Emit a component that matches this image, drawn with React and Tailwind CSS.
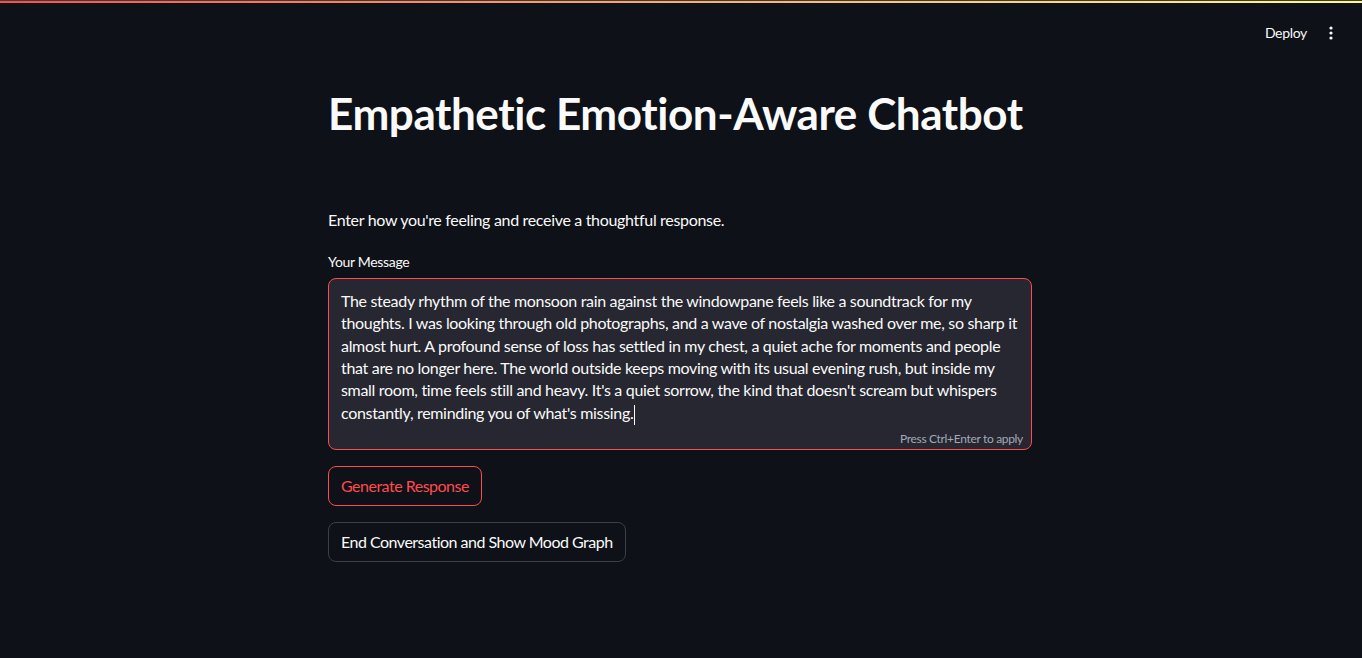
import React from "react";

const lines = [
  "The steady rhythm of the monsoon rain against the windowpane feels like a soundtrack for my",
  "thoughts. I was looking through old photographs, and a wave of nostalgia washed over me, so sharp it",
  "almost hurt. A profound sense of loss has settled in my chest, a quiet ache for moments and people",
  "that are no longer here. The world outside keeps moving with its usual evening rush, but inside my",
  "small room, time feels still and heavy. It's a quiet sorrow, the kind that doesn't scream but whispers",
  "constantly, reminding you of what's missing.",
];

const App = () => {
  return (
    <div
      className="min-h-screen w-full bg-[#0e1117] text-[#fafafa] tracking-[-0.32px]"
      style={{ fontFamily: "Lato, 'Noto Sans', sans-serif" }}
    >
      {/* decoration strip */}
      <div className="h-[1px] bg-[#3a3b42]"></div>
      <div className="h-[2px] bg-gradient-to-r from-[#ff4b4b] to-[#fffd80]"></div>

      <header className="flex h-[60px] items-center justify-end pr-[15px]">
        <button className="text-sm text-[#fafafa] px-2">Deploy</button>
        <button className="flex h-8 w-8 items-center justify-center">
          <svg width="4" height="14" viewBox="0 0 4 14" fill="#fafafa">
            <circle cx="2" cy="2" r="1.6" />
            <circle cx="2" cy="7" r="1.6" />
            <circle cx="2" cy="12" r="1.6" />
          </svg>
        </button>
      </header>

      <main className="mx-auto w-[706px] pr-[2px]">
        <h1 className="mt-[24px] text-[44px] font-bold leading-[1.2] tracking-[-0.42px]">
          Empathetic Emotion-Aware Chatbot
        </h1>

        <p className="mt-[67px] text-base leading-[1.6]">
          Enter how you're feeling and receive a thoughtful response.
        </p>

        <label className="mt-[19px] block text-sm leading-[1.6]">Your Message</label>

        <div className="relative mt-[4px] h-[172px] rounded-lg border border-[#ff4b4b] bg-[#262730] px-[12px] pt-[11px]">
          <div className="text-base leading-[22.4px]">
            {lines.map((l, i) => (
              <div key={i} className="whitespace-nowrap">
                {l}
                {i === lines.length - 1 && (
                  <span className="ml-[1px] inline-block h-[20px] w-[1px] align-middle bg-[#fafafa]"></span>
                )}
              </div>
            ))}
          </div>
          <div className="absolute bottom-[2px] right-[8px] text-xs text-[#a3a8b8]">
            Press Ctrl+Enter to apply
          </div>
        </div>

        <div className="mt-4 flex flex-col items-start gap-4">
          <button className="h-[40px] rounded-lg border border-[#ff4b4b] px-3 text-base tracking-[-0.5px] text-[#ff4b4b]">
            Generate Response
          </button>
          <button className="h-[40px] rounded-lg border border-[#3d3f47] px-3 text-base tracking-[-0.5px] text-[#fafafa]">
            End Conversation and Show Mood Graph
          </button>
        </div>
      </main>
    </div>
  );
};

export default App;
